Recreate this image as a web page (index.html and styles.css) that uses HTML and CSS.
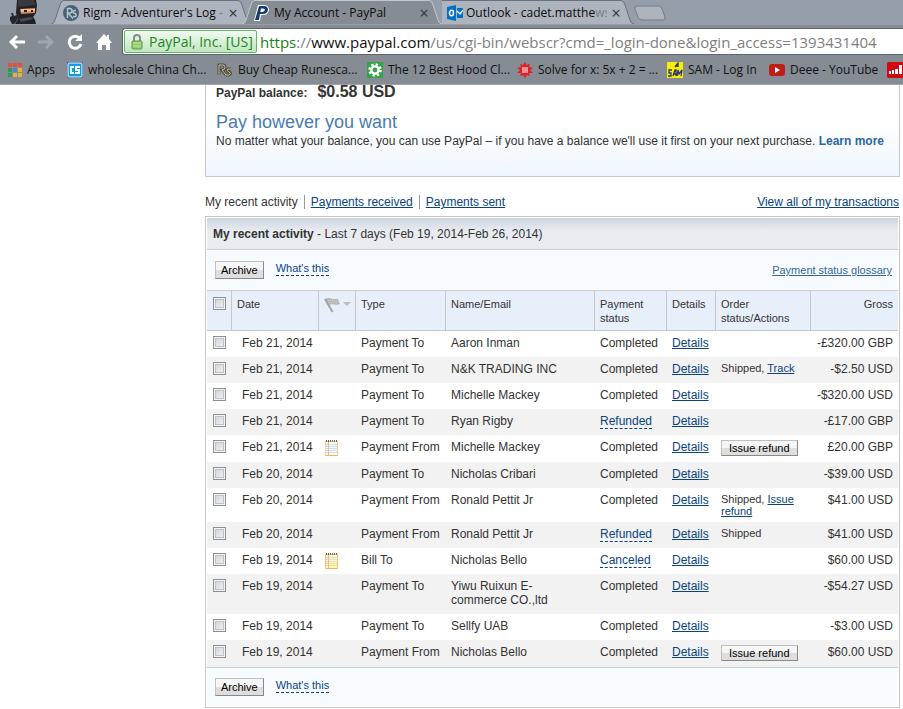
FILE: index.html
```html
<!DOCTYPE html>
<html lang="en">
<head>
<meta charset="utf-8">
<title>My Account - PayPal</title>
<link rel="stylesheet" href="styles.css">
</head>
<body>
<header class="browser">
  <nav class="tabs" aria-label="Tabs">
    <svg class="ninja" width="40" height="24" viewBox="0 0 40 24" aria-hidden="true">
      <path d="M10 17l2-1-1-3 2 0 1 3 3-1 1 3-2 4-2 2h-2l-2-4z" fill="#25262b"/>
      <path d="M17 0h19l1 5-1 8-3 4 2 3 1 4H15l3-5-2-6z" fill="#212226"/>
      <path d="M18 0h16l2 5-18 2z" fill="#38393f"/>
      <path d="M20 9l15-1v5l-14 1z" fill="#d08a5c"/>
      <path d="M21 9h14v2l-14 1z" fill="#f3bd92"/>
      <path d="M24 10h3v2h-3zM31 10h2v2h-2z" fill="#2b2020"/>
      <path d="M19 19l12-2 2 2-12 3z" fill="#4a4b55"/>
    </svg>
    <div class="tab">
      <svg class="edge" width="12" height="24" viewBox="0 0 12 24" aria-hidden="true"><path d="M0 24q3 0 4-4l5-15q1-4 3-4v23z" fill="#adb4be"/><path d="M0 24q3 0 4-4l5-15q1-4 3-4" fill="none" stroke="#69717b"/></svg>
      <div class="tab-face">
        <svg width="16" height="16" viewBox="0 0 16 16" aria-hidden="true"><circle cx="8" cy="8" r="8" fill="#476174"/><path d="M4.500 13V3.500h2.500q2 0 2 2.200T6.500 8H5l5 5.500M13 5.500h-2q-2 1.500 0 2.500 3 1 2 3-1 1-3 .5" fill="none" stroke="#b9c8d2" stroke-width="1.400"/></svg>
        <span class="tab-title">Rigm - Adventurer's Log <span class="fade">-</span></span><button class="close" aria-label="Close tab">×</button>
      </div>
      <svg class="edge" width="12" height="24" viewBox="0 0 12 24" aria-hidden="true"><path d="M0 1q2 0 3 4l5 15q1 4 4 4H0z" fill="#adb4be"/><path d="M0 1q2 0 3 4l5 15q1 4 4 4" fill="none" stroke="#69717b"/></svg>
    </div>
    <div class="tab active">
      <svg class="edge" width="12" height="24" viewBox="0 0 12 24" aria-hidden="true"><path d="M0 24q3 0 4-4l5-15q1-4 3-4v23z" fill="#868c93"/><path d="M0 24q3 0 4-4l5-15q1-4 3-4" fill="none" stroke="#c2c7cd"/></svg>
      <div class="tab-face">
        <svg width="16" height="16" viewBox="0 0 16 16" aria-hidden="true"><path d="M4 0h7q4 1 4 5-1 5-6 5H7l-1 6H0z" fill="#fff"/><path d="M5 1h5q4 0 4 4-1 4-5 4H6l-1 6H1zM7 3.500L6.300 7H8q2 0 3-2 0-1.500-2-1.500z" fill="#173a70" fill-rule="evenodd"/></svg>
        <span class="tab-title">My Account - PayPal</span><button class="close" aria-label="Close tab">×</button>
      </div>
      <svg class="edge" width="12" height="24" viewBox="0 0 12 24" aria-hidden="true"><path d="M0 1q2 0 3 4l5 15q1 4 4 4H0z" fill="#868c93"/><path d="M0 1q2 0 3 4l5 15q1 4 4 4" fill="none" stroke="#c2c7cd"/></svg>
    </div>
    <div class="tab last">
      <div class="tab-face">
        <svg width="16" height="16" viewBox="0 0 16 16" aria-hidden="true"><path d="M0 2l9-2v16l-9-2z" fill="#0072c6"/><ellipse cx="4.500" cy="8" rx="2" ry="2.700" fill="none" stroke="#fff" stroke-width="1.500"/><path d="M10 3h6v10h-6z" fill="#0072c6"/><path d="M10 6l3 3 3-4" fill="none" stroke="#fff" stroke-width="1.300"/></svg>
        <span class="tab-title">Outlook - cadet.matthe<span class="fade">ws</span></span><button class="close" aria-label="Close tab">×</button>
      </div>
      <svg class="edge" width="12" height="24" viewBox="0 0 12 24" aria-hidden="true"><path d="M0 1q2 0 3 4l5 15q1 4 4 4H0z" fill="#adb4be"/><path d="M0 1q2 0 3 4l5 15q1 4 4 4" fill="none" stroke="#69717b"/></svg>
    </div>
    <button class="new-tab" aria-label="New tab"><svg width="32" height="16" viewBox="0 0 32 16"><path d="M3 1h22q2 0 3 3l3 8q1 3-2 3H8q-3 0-4-3L1 4Q0 1 3 1z" fill="#adb4be" stroke="#747d88"/></svg></button>
  </nav>
  <div class="toolbar">
    <div class="nav-buttons">
      <button aria-label="Back"><svg width="16" height="16" viewBox="0 0 16 16"><path d="M8 2L2 8l6 6M2 8h14" fill="none" stroke="#fff" stroke-width="3"/></svg></button>
      <button aria-label="Forward" disabled><svg width="16" height="16" viewBox="0 0 16 16"><path d="M8 2l6 6-6 6M14 8H0" fill="none" stroke="#a2a7ac" stroke-width="3"/></svg></button>
      <button aria-label="Reload"><svg width="16" height="16" viewBox="0 0 16 16"><path d="M13 4.500A6 6 0 1 0 14 10" fill="none" stroke="#fff" stroke-width="3"/><path d="M15 0v7H8z" fill="#fff"/></svg></button>
      <button aria-label="Home"><svg width="16" height="16" viewBox="0 0 16 16"><path d="M8 0l3 3V1h2v4l3 4h-2v7h-4v-5H6v5H2V9H0z" fill="#fff"/></svg></button>
    </div>
    <div class="address">
      <span class="identity"><svg width="12" height="16" viewBox="0 0 12 16" aria-hidden="true"><path d="M3 8V4q0-3 3-3t3 3v4" fill="none" stroke="#898e89" stroke-width="2"/><rect x="1" y="7" width="10" height="8" rx="1" fill="#91ce6d" stroke="#62944b"/><path d="M2 9h8M2 12h8" stroke="#bae69f"/></svg>PayPal, Inc. [US]</span>
      <div class="url"><span class="secure">https</span>://<span class="host">www.paypal.com</span>/us/cgi-bin/webscr?cmd=_login-done&amp;login_access=1393431404</div>
    </div>
  </div>
  <nav class="bookmarks" aria-label="Bookmarks">
    <a class="bm-apps" href="#"><svg width="14" height="14" viewBox="0 0 14 14"><path d="M0 0h4v4H0zM5 0h4v4H5zM10 0h4v4h-4z" fill="#e94b3c"/><path d="M0 5h4v4H0z" fill="#2c9b54"/><path d="M5 5h4v4H5z" fill="#4285e8"/><path d="M10 5h4v4h-4z" fill="#e8b22c"/><path d="M0 10h4v4H0z" fill="#2c9b54"/><path d="M5 10h4v4H5zM10 10h4v4h-4z" fill="#e8b22c"/></svg>Apps</a>
    <a class="bm-shop" href="#"><svg width="16" height="16" viewBox="0 0 16 16"><rect width="16" height="16" rx="2" fill="#0b4f8c"/><rect x="1" y="1" width="14" height="14" rx="1" fill="#139be5" stroke="#fff"/><path d="M7 5H4v6h3M13 5H9v3h3v3H8" fill="none" stroke="#fff" stroke-width="1.800"/></svg>wholesale China Ch...</a>
    <a class="bm-rs" href="#"><svg width="16" height="16" viewBox="0 0 16 16"><path d="M2 13V3h4q2 0 2 2.500T5 8l4 5M14 7h-3q-2 2 1 3 3 1 0 3H9" fill="none" stroke="#4e4a3c" stroke-width="3"/><path d="M2 13V3h4q2 0 2 2.500T5 8l4 5M14 7h-3q-2 2 1 3 3 1 0 3H9" fill="none" stroke="#c7bfa6"/></svg>Buy Cheap Runesca...</a>
    <a class="bm-hood" href="#"><svg width="16" height="16" viewBox="0 0 16 16"><path d="M0 0h16v16H0z" fill="#35a447"/><circle cx="8" cy="8" r="5.500" fill="none" stroke="#fff" stroke-width="2.500" stroke-dasharray="2.200 2.120"/><circle cx="8" cy="8" r="3.600" fill="none" stroke="#fff" stroke-width="2.400"/></svg>The 12 Best Hood Cl...</a>
    <a class="bm-solve" href="#"><svg width="16" height="16" viewBox="0 0 16 16"><path d="M8 0l1.500 3L13 2l-1 3 4 1-3 2 3 3-4 0 1 3-3-1-2 3-2-3-3 1 1-3-4 0 3-3-3-2 4-1-1-3 3 1z" fill="#dd2025"/><path d="M5 6h6M5 8h6M5 10h6" stroke="#fff"/></svg>Solve for x: 5x + 2 = ...</a>
    <a class="bm-sam" href="#"><svg width="16" height="16" viewBox="0 0 16 16"><path d="M0 0h16v16H0z" fill="#fbed00"/><path d="M8 5l3-4v4M8 4h3M5 8H2v3h2v3H1M6 14l2-6h1v6M6 12h3M10 14l1-6 1 4 3-4-1 6" fill="none" stroke="#27347c" stroke-width="1.300"/></svg>SAM - Log In</a>
    <a class="bm-tube" href="#"><svg width="16" height="16" viewBox="0 0 16 16"><rect y="2" width="16" height="12" rx="3" fill="#bf1d16"/><path d="M6 5l5 3-5 3z" fill="#fff"/></svg>Deee - YouTube</a>
    <a class="bm-chart" href="#" aria-label="Chart"><svg width="16" height="16" viewBox="0 0 16 16"><rect width="18" height="16" rx="2" fill="#cf0a12"/><path d="M2 9h2v3H2zM5 8h2v4H5zM8 7h3v5H8zM12 3h3v9h-3z" fill="#fff"/></svg></a>
  </nav>
</header>

<main class="page">
  <section class="balance">
    <p class="amount"><span class="amount-label">PayPal balance:</span><span class="amount-value">$0.58 USD</span></p>
    <h2>Pay however you want</h2>
    <p class="note">No matter what your balance, you can use PayPal – if you have a balance we'll use it first on your next purchase. <a href="#">Learn more</a></p>
  </section>

  <nav class="activity-nav" aria-label="Activity">
    <span class="current">My recent activity</span>
    <span class="item"><a href="#">Payments received</a></span>
    <span class="item"><a href="#">Payments sent</a></span>
    <a class="view-all" href="#">View all of my transactions</a>
  </nav>

  <section class="activity">
    <h3><b>My recent activity</b> - Last 7 days (Feb 19, 2014-Feb 26, 2014)</h3>
    <div class="actions">
      <button class="btn">Archive</button><a class="hint" href="#">What's this</a>
      <a class="glossary" href="#">Payment status glossary</a>
    </div>
    <table>
      <colgroup><col class="c-check"><col class="c-date"><col class="c-flag"><col class="c-type"><col class="c-name"><col class="c-status"><col class="c-details"><col class="c-order"><col class="c-gross"></colgroup>
      <thead>
        <tr>
          <th><input type="checkbox" aria-label="Select all"></th>
          <th>Date</th>
          <th class="flag"><svg width="28" height="16" viewBox="0 0 28 16" aria-label="Flag"><path d="M1 2q3-1.500 6-.5 4 1 6.500 0L16 7q-3 1-5.500.5Q7 7 4.500 8z" fill="#b8b8b8"/><path d="M2 3.500h11M3.500 5.500h11" stroke="#cfcfcf" stroke-dasharray="1 1"/><path d="M1 2l7.500 13" stroke="#a3a3a3" stroke-width="2"/><path d="M19 5h8l-4 4z" fill="#b9bcc0"/></svg></th>
          <th>Type</th><th>Name/Email</th><th>Payment status</th><th>Details</th><th>Order status/Actions</th><th class="gross">Gross</th>
        </tr>
      </thead>
      <tbody>
        <tr><td><input type="checkbox" aria-label="Select"></td><td class="date">Feb 21, 2014</td><td></td><td>Payment To</td><td>Aaron Inman</td><td>Completed</td><td><a href="#">Details</a></td><td></td><td class="gross">-£320.00 GBP</td></tr>
        <tr><td><input type="checkbox" aria-label="Select"></td><td class="date">Feb 21, 2014</td><td></td><td>Payment To</td><td>N&amp;K TRADING INC</td><td>Completed</td><td><a href="#">Details</a></td><td class="order">Shipped, <a href="#">Track</a></td><td class="gross">-$2.50 USD</td></tr>
        <tr><td><input type="checkbox" aria-label="Select"></td><td class="date">Feb 21, 2014</td><td></td><td>Payment To</td><td>Michelle Mackey</td><td>Completed</td><td><a href="#">Details</a></td><td></td><td class="gross">-$320.00 USD</td></tr>
        <tr><td><input type="checkbox" aria-label="Select"></td><td class="date">Feb 21, 2014</td><td></td><td>Payment To</td><td>Ryan Rigby</td><td><a class="hint" href="#">Refunded</a></td><td><a href="#">Details</a></td><td></td><td class="gross">-£17.00 GBP</td></tr>
        <tr><td><input type="checkbox" aria-label="Select"></td><td class="date">Feb 21, 2014</td><td class="memo"><svg width="13" height="16" viewBox="0 0 13 16" aria-label="Note"><path d="M.5 1.500h12v14H.5z" fill="#fffef6" stroke="#f6cf98"/><path d="M1 4.500h11M1 6.500h11M1 8.500h11M1 10.500h11M1 12.500h11" stroke="#c3e0f2"/><path d="M3.500 2v13" stroke="#ffab9d"/><path d="M1 .5h12M1 1.500h12" stroke="#666" stroke-dasharray="1 1"/><path d="M.5 15.500h12" stroke="#f0b35a"/></svg></td><td>Payment From</td><td>Michelle Mackey</td><td>Completed</td><td><a href="#">Details</a></td><td class="order"><button class="btn small">Issue refund</button></td><td class="gross">£20.00 GBP</td></tr>
        <tr><td><input type="checkbox" aria-label="Select"></td><td class="date">Feb 20, 2014</td><td></td><td>Payment To</td><td>Nicholas Cribari</td><td>Completed</td><td><a href="#">Details</a></td><td></td><td class="gross">-$39.00 USD</td></tr>
        <tr><td><input type="checkbox" aria-label="Select"></td><td class="date">Feb 20, 2014</td><td></td><td>Payment From</td><td>Ronald Pettit Jr</td><td>Completed</td><td><a href="#">Details</a></td><td class="order">Shipped, <a href="#">Issue refund</a></td><td class="gross">$41.00 USD</td></tr>
        <tr><td><input type="checkbox" aria-label="Select"></td><td class="date">Feb 20, 2014</td><td></td><td>Payment From</td><td>Ronald Pettit Jr</td><td><a class="hint" href="#">Refunded</a></td><td><a href="#">Details</a></td><td class="order">Shipped</td><td class="gross">$41.00 USD</td></tr>
        <tr><td><input type="checkbox" aria-label="Select"></td><td class="date">Feb 19, 2014</td><td class="memo"><svg width="13" height="16" viewBox="0 0 13 16" aria-label="Note"><path d="M.5 1.500h12v14H.5z" fill="#fff9b8" stroke="#f6c47e"/><path d="M1 4.500h11M1 6.500h11M1 8.500h11" stroke="#cfe3e0"/><path d="M1 10.500h11M1 12.500h11" stroke="#f1e08c"/><path d="M3.500 2v13" stroke="#ffab9d"/><path d="M1 .5h12M1 1.500h12" stroke="#666" stroke-dasharray="1 1"/><path d="M.5 15.500h12" stroke="#f0b35a"/></svg></td><td>Bill To</td><td>Nicholas Bello</td><td><a class="hint" href="#">Canceled</a></td><td><a href="#">Details</a></td><td></td><td class="gross">$60.00 USD</td></tr>
        <tr><td><input type="checkbox" aria-label="Select"></td><td class="date">Feb 19, 2014</td><td></td><td>Payment To</td><td>Yiwu Ruixun E-<br>commerce CO.,ltd</td><td>Completed</td><td><a href="#">Details</a></td><td></td><td class="gross">-$54.27 USD</td></tr>
        <tr><td><input type="checkbox" aria-label="Select"></td><td class="date">Feb 19, 2014</td><td></td><td>Payment To</td><td>Sellfy UAB</td><td>Completed</td><td><a href="#">Details</a></td><td></td><td class="gross">-$3.00 USD</td></tr>
        <tr><td><input type="checkbox" aria-label="Select"></td><td class="date">Feb 19, 2014</td><td></td><td>Payment From</td><td>Nicholas Bello</td><td>Completed</td><td><a href="#">Details</a></td><td class="order"><button class="btn small">Issue refund</button></td><td class="gross">$60.00 USD</td></tr>
      </tbody>
    </table>
    <div class="actions bottom">
      <button class="btn">Archive</button><a class="hint" href="#">What's this</a>
    </div>
  </section>
</main>
</body>
</html>
```
FILE: styles.css
```css
* { box-sizing: border-box; }
body { margin: 0; background: #fff; color: #333; font: 12px/14px "Liberation Sans", Arial, sans-serif; }
p, h2, h3 { margin: 0; font-weight: normal; }
button { font-family: inherit; padding: 0; border: 0; background: none; color: inherit; }
a { color: #084482; }
svg { display: block; flex: none; }

/* Browser frame */
.browser { background: #868c93; color: #0b0b0b; font-family: "Open Sans", "Noto Sans", sans-serif; border-bottom: 1px solid #a5a5a7; overflow: hidden; }
.tabs { display: flex; height: 24px; background: #959fab; }
.ninja { margin-right: 11px; }
.tab { display: flex; }
.tab + .tab { margin-left: -9px; }
.tab-face { display: flex; align-items: center; gap: 4px; width: 176px; height: 24px; border-top: 1px solid #69717b; background: #adb4be; white-space: nowrap; }
.active .tab-face { background: #868c93; border-color: #c2c7cd; }
.last .tab-face { width: 180px; padding-left: 5px; gap: 3px; }
.tab.last { margin-left: 0; }
.tab-title { flex: 1; min-width: 0; }
.last .tab-title { overflow: hidden; }
.fade { color: #777f88; }
.close { flex: none; width: 12px; font-size: 16px; line-height: 16px; color: #333; }
.new-tab { margin-top: 5px; align-self: flex-start; }
.toolbar { display: flex; align-items: center; height: 34px; padding-left: 9px; border-top: 1px solid #9a9fa5; }
.nav-buttons { display: flex; gap: 13px; margin-right: 10px; }
.address { display: flex; flex: 1; align-items: center; min-width: 0; height: 27px; padding: 1px; overflow: hidden; background: #fff; border: 1px solid #60666d; border-right: 0; border-radius: 3px 0 0 3px; }
.identity { display: flex; align-items: center; flex: none; gap: 6px; width: 133px; height: 23px; padding-left: 6px; color: #1d851d; font-size: 14px; white-space: nowrap; background: linear-gradient(#f0faf0, #c1e6c2); border: 1px solid #62b865; border-radius: 2px; }
.url { margin-left: 3px; font-size: 15px; line-height: 22px; color: #808080; white-space: nowrap; }
.secure { color: #178517; }
.host { color: #111; }
.bookmarks { display: flex; height: 26px; align-items: center; padding: 0 0 2px 8px; white-space: nowrap; }
.bookmarks a { display: flex; flex: none; align-items: center; gap: 5px; color: #111; text-decoration: none; }
.bm-apps { width: 59px; }
.bm-shop { width: 150px; }
.bm-rs, .bm-hood, .bm-solve { width: 150px; }
.bm-sam { width: 102px; }
.bm-tube { width: 118px; }

/* Account page */
.page { margin: 0 3px 0 205px; }
.balance { height: 92px; padding: 0 10px; border: 1px solid #c8c8c8; border-top: 0; background: linear-gradient(#fff 40%, #eef6fe); }
.amount { display: flex; align-items: baseline; gap: 10px; height: 26px; font-weight: bold; }
.amount-value { font-size: 16px; }
.balance h2 { font-size: 18px; line-height: 22px; color: #4a7bb0; }
.note { font-size: 12px; line-height: 16px; white-space: nowrap; }
.note a { font-weight: bold; color: #2c67a5; text-decoration: none; }
.activity-nav { display: flex; align-items: center; height: 39px; padding: 11px 1px 0 0; }
.activity-nav .item { margin-left: 6px; padding-left: 6px; border-left: 1px solid #999; }
.view-all { margin-left: auto; }
.activity { border: 1px solid #c8c8c8; padding: 1px; }
.activity h3 { height: 32px; padding: 8px 6px; font-size: 12px; line-height: 16px; border-bottom: 1px solid #ccc; background: linear-gradient(#ccd4df, #e8ebf0 40%); }
.actions { display: flex; align-items: center; height: 40px; padding: 0 6px 0 8px; background: #f7fbff; font-size: 11px; }
.actions.bottom { height: 38px; }
.actions .hint { margin: 0 0 4px 12px; }
.glossary { margin-left: auto; color: #336699; }
.hint { text-decoration: none; border-bottom: 1px dashed #084482; }
.btn { height: 18px; padding: 0 5px; border: 1px solid #999; border-color: #bfbfbf #888 #888 #bfbfbf; background: linear-gradient(#f6f6f6 50%, #dedede 50%); color: #000; font-size: 11px; line-height: 14px; }
.small { display: block; height: 16px; margin-bottom: 1px; padding: 0 7px; }
table { width: 100%; table-layout: fixed; border-collapse: separate; border-spacing: 0; border: solid #ccc; border-width: 1px 0; }
.c-check { width: 25px; }
.c-date { width: 87px; }
.c-flag { width: 37px; }
.c-type { width: 90px; }
.c-status { width: 72px; }
.c-details { width: 49px; }
.c-order { width: 95px; }
.c-gross { width: 87px; }
th, td { padding: 5px 0 7px 5px; text-align: left; vertical-align: top; }
th { height: 40px; padding-top: 6px; padding-bottom: 5px; font-size: 11px; font-weight: normal; background: #e7f0fa; border-right: 1px solid #c8c8c8; border-bottom: 1px solid #c8c8c8; }
th:last-child { border-right: 0; }
td:first-child, th:first-child { padding-left: 6px; }
tbody tr:nth-child(even) { background: #f2f2f2; }
td.date { padding-left: 10px; }
th.gross, td.gross { padding-right: 5px; text-align: right; }
td.order { padding-bottom: 5px; font-size: 11px; line-height: 12px; }
td.memo { padding: 5px 0 5px 6px; }
input[type="checkbox"] { display: block; appearance: none; width: 13px; height: 13px; margin: 0; border: 1px solid #8e8f8f; background: linear-gradient(135deg, #cbcfd5, #f6f6f6); box-shadow: inset 0 0 0 1px #f4f4f4, inset 0 0 0 2px #bdc2c9; }
```
